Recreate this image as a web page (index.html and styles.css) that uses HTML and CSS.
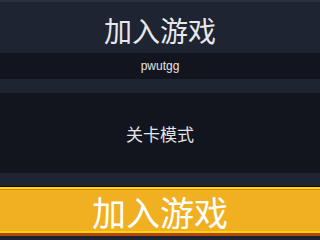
FILE: index.html
```html
<!DOCTYPE html>
<html lang="zh-CN">

<head>
    <meta charset="UTF-8">
    <meta name="viewport" content="width=device-width, initial-scale=1.0">
    <title>加入游戏</title>
    <link rel="stylesheet" href="styles.css">
</head>

<body>

    <div class="screen">
        <header class="title-bar">
            <h1>加入游戏</h1>
        </header>

        <div class="room-row">pwutgg</div>

        <div class="band"></div>

        <div class="mode-panel">关卡模式</div>

        <div class="band band-low"></div>

        <button class="join-btn">加入游戏</button>

        <div class="bottom-strip"></div>
    </div>

</body>

</html>
```

FILE: styles.css
```css
body {
    margin: 0;
    background-color: #12141e;
    font-family: 'Noto Sans CJK SC', 'Liberation Sans', sans-serif;
}

.screen {
    width: 320px;
    height: 240px;
    display: flex;
    flex-direction: column;
    overflow: hidden;
}

.screen > * {
    flex-shrink: 0;
    box-sizing: border-box;
}

.title-bar {
    height: 53px;
    padding-top: 5px;
    border-top: 2px solid #2a303c;
    background-color: #1f2433;
    display: flex;
    align-items: center;
    justify-content: center;
}

.title-bar h1 {
    margin: 0;
    font-size: 28px;
    font-weight: normal;
    color: #e8e8ec;
    line-height: 1;
}

.room-row {
    height: 26px;
    background-color: #12141e;
    color: #e4e4e8;
    font-family: 'Liberation Sans', sans-serif;
    font-size: 12px;
    display: flex;
    align-items: center;
    justify-content: center;
}

.band {
    height: 14px;
    background-color: #1f2433;
}

.band-low {
    height: 13px;
}

.mode-panel {
    height: 80px;
    background-color: #12141e;
    color: #e4e4e8;
    font-size: 17px;
    display: flex;
    align-items: center;
    justify-content: center;
}

.join-btn {
    height: 47px;
    margin: 0;
    padding: 3px 0 0;
    border: none;
    border-top: 1px solid #0a0a0a;
    background-color: #f0b022;
    box-shadow: inset 0 2px 0 #ffd60a, inset 0 3px 0 #d9890e, inset 0 -2px 0 #ffd60a;
    color: #ffffff;
    font-family: 'Noto Sans CJK SC', sans-serif;
    font-size: 34px;
    line-height: 1;
    display: flex;
    align-items: center;
    justify-content: center;
}

.bottom-strip {
    height: 7px;
    background-color: #b4480f;
    border-bottom: 4px solid #1f2433;
}
```
